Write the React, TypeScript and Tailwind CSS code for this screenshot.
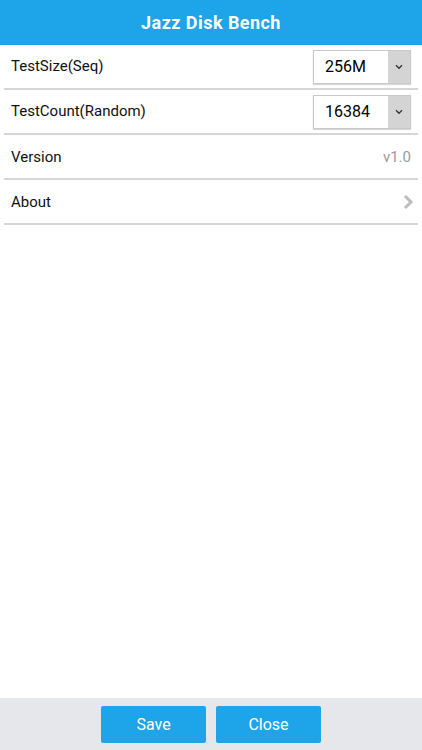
import React from "react";

function Select({ value }: { value: string }) {
  return (
    <div className="flex h-[34px] w-[98px] border border-[#c8c8c8] bg-white shadow-[0_1px_1px_rgba(0,0,0,0.15)]">
      <div className="flex flex-1 items-center pl-[11px] text-[16px] text-black">{value}</div>
      <div className="flex w-[22px] items-center justify-center bg-[#d4d4d4]">
        <svg width="10" height="6" viewBox="0 0 10 6">
          <path d="M2 1.3 L5 4.3 L8 1.3" fill="none" stroke="#333" strokeWidth="1.3" />
        </svg>
      </div>
    </div>
  );
}

export default function App() {
  return (
    <div
      className="flex h-[750px] w-[422px] flex-col bg-white"
      style={{ fontFamily: "Roboto, 'Helvetica Neue', Arial, sans-serif" }}
    >
      <div className="flex h-[45px] items-center justify-center bg-[#1ea4e8]">
        <span className="text-[18px] font-bold tracking-[0.45px] text-white">Jazz Disk Bench</span>
      </div>
      <div className="flex-1">
        <div className="mx-[4px] flex h-[45px] items-center justify-between border-b-2 border-[#d6d6d6] pl-[7px] pr-[7px]">
          <span className="text-[15px] text-[#111]">TestSize(Seq)</span>
          <Select value="256M" />
        </div>
        <div className="mx-[4px] flex h-[45px] items-center justify-between border-b-2 border-[#d6d6d6] pl-[7px] pr-[7px]">
          <span className="text-[15px] text-[#111]">TestCount(Random)</span>
          <Select value="16384" />
        </div>
        <div className="mx-[4px] flex h-[45px] items-center justify-between border-b-2 border-[#d6d6d6] pl-[7px] pr-[7px]">
          <span className="pt-[1px] text-[15px] text-[#111]">Version</span>
          <span className="pt-[1px] text-[15px] text-[#9a9a9a]">v1.0</span>
        </div>
        <div className="mx-[4px] flex h-[45px] items-center justify-between border-b-2 border-[#d6d6d6] pl-[7px] pr-[4px]">
          <span className="pt-[1px] text-[15px] text-[#111]">About</span>
          <svg width="12" height="16" viewBox="0 0 12 16">
            <path d="M3 2 L9 8 L3 14" fill="none" stroke="#bdbdbd" strokeWidth="3" />
          </svg>
        </div>
      </div>
      <div className="flex h-[52px] items-start justify-center gap-[10px] bg-[#e6e7eb] pt-[8px]">
        <button className="flex h-[37px] w-[105px] items-center justify-center rounded-[2px] bg-[#1ea4e8] text-[16px] text-white">
          Save
        </button>
        <button className="flex h-[37px] w-[105px] items-center justify-center rounded-[2px] bg-[#1ea4e8] text-[16px] text-white">
          Close
        </button>
      </div>
    </div>
  );
}
